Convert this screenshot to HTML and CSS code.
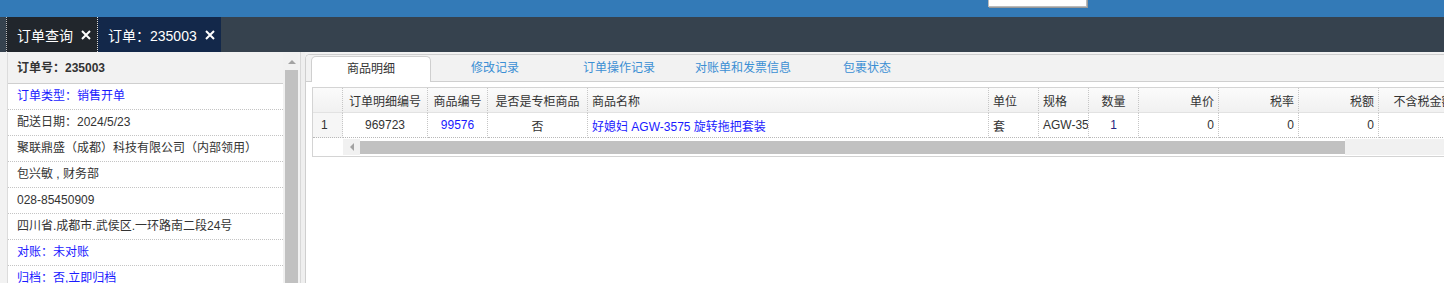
FILE: index.html
```html
<!DOCTYPE html>
<html lang="zh-CN">
<head>
  <meta charset="UTF-8">
  <meta name="viewport" content="width=device-width, initial-scale=1.0">
  <title>订单：235003</title>
  <link rel="stylesheet" href="styles.css">
</head>
<body>

<div class="topbar">
  <div class="logo">订单管理系统后台</div>
  <div class="search"></div>
</div>

<div class="tabbar">
  <div class="tab tab-first">订单查询
    <svg class="close" width="10" height="10" viewBox="0 0 10 10"><path d="M1 1L9 9M9 1L1 9" stroke="#fff" stroke-width="2"/></svg>
  </div>
  <div class="tab tab-cur">订单：235003
    <svg class="close" width="10" height="10" viewBox="0 0 10 10"><path d="M1 1L9 9M9 1L1 9" stroke="#fff" stroke-width="2"/></svg>
  </div>
</div>

<div class="main">
  <div class="side">
    <div class="info">
      <div class="info-head">订单号：235003</div>
      <div class="info-row blue">订单类型：销售开单</div>
      <div class="info-row">配送日期：2024/5/23</div>
      <div class="info-row">聚联鼎盛（成都）科技有限公司（内部领用）</div>
      <div class="info-row">包兴敏 , 财务部</div>
      <div class="info-row">028-85450909</div>
      <div class="info-row">四川省.成都市.武侯区.一环路南二段24号</div>
      <div class="info-row blue">对账：未对账</div>
      <div class="info-row blue">归档：否,立即归档</div>
    </div>
    <div class="vscroll">
      <div class="vscroll-up"><span class="arrow-up"></span></div>
      <div class="vscroll-thumb"></div>
    </div>
  </div>

  <div class="split"></div>

  <div class="content">
    <div class="subtabs">
      <div class="subtab active">商品明细</div>
      <div class="subtab">修改记录</div>
      <div class="subtab">订单操作记录</div>
      <div class="subtab">对账单和发票信息</div>
      <div class="subtab">包裹状态</div>
    </div>

    <div class="grid">
      <table class="items">
        <colgroup>
          <col style="width:30px"><col style="width:85px"><col style="width:60px"><col style="width:100px">
          <col style="width:401px"><col style="width:50px"><col style="width:50px"><col style="width:50px">
          <col style="width:80px"><col style="width:80px"><col style="width:80px"><col style="width:90px">
        </colgroup>
        <thead>
          <tr>
            <th class="rn"></th>
            <th>订单明细编号</th>
            <th>商品编号</th>
            <th>是否是专柜商品</th>
            <th class="left">商品名称</th>
            <th class="left">单位</th>
            <th class="left">规格</th>
            <th>数量</th>
            <th class="right">单价</th>
            <th class="right">税率</th>
            <th class="right">税额</th>
            <th>不含税金额</th>
          </tr>
        </thead>
        <tbody>
          <tr>
            <td class="rn">1</td>
            <td>969723</td>
            <td class="link">99576</td>
            <td>否</td>
            <td class="left link">好媳妇 AGW-3575 旋转拖把套装</td>
            <td class="left">套</td>
            <td class="left">AGW-3575</td>
            <td class="qty">1</td>
            <td class="right">0</td>
            <td class="right">0</td>
            <td class="right">0</td>
            <td></td>
          </tr>
        </tbody>
      </table>
      <div class="hscroll">
        <div class="hscroll-blank"></div>
        <div class="hscroll-left"><span class="arrow-left"></span></div>
        <div class="hscroll-thumb"></div>
      </div>
    </div>
  </div>
</div>

</body>
</html>
```

FILE: styles.css
```css
body {
  margin: 0;
  height: 283px;
  overflow: hidden;
  font-family: "Liberation Sans", "Noto Sans CJK SC", sans-serif;
  font-size: 12px;
  color: #333;
  background-color: #f2f2f2;
}

/* top bar */
.topbar {
  display: flex;
  height: 17px;
  padding-left: 12px;
  overflow: hidden;
  background-color: #337ab7;
}
.logo {
  flex: 0 0 976px;
  margin-top: -20px;
  font-size: 18px;
  line-height: 20px;
  font-weight: bold;
  color: #fff;
  white-space: nowrap;
}
.search {
  width: 97px;
  height: 20px;
  margin-top: -15px;
  background-color: #fff;
  border: 1px solid #bbb;
  box-shadow: 1px 1px 0 #9a9a9a;
}

/* page tabs */
.tabbar {
  display: flex;
  height: 35px;
  padding-left: 6px;
  background-color: #36424e;
}
.tab {
  display: flex;
  align-items: center;
  gap: 8px;
  font-size: 14px;
  color: #fff;
  white-space: nowrap;
}
.tab-first {
  width: 80px;
  padding-left: 10px;
  background-color: #21262c;
  border-left: 1px dotted #bbb;
  border-right: 1px dotted #ddd;
}
.tab-cur {
  width: 113px;
  padding-left: 10px;
  background-color: #13284a;
}
.close {
  flex: none;
}

/* main area */
.main {
  display: flex;
  height: 231px;
  overflow: hidden;
}
.side {
  display: flex;
  flex: none;
  margin: 1px 0 0 7px;
}
.info {
  width: 275px;
  background-color: #fff;
  border-left: 1px solid #dcdcdc;
}
.info-head {
  height: 30px;
  line-height: 30px;
  padding-left: 9px;
  font-weight: bold;
  background-color: #f2f2f2;
  border-bottom: 1px solid #cfcfcf;
}
.info-row {
  height: 25px;
  line-height: 25px;
  padding-left: 9px;
  white-space: nowrap;
  border-bottom: 1px dotted #c4c4c4;
}
.blue {
  color: #1a1aff;
}
.vscroll {
  width: 15px;
  background-color: #f1f1f1;
}
.vscroll-up {
  display: flex;
  justify-content: center;
  align-items: center;
  height: 17px;
  padding-left: 2px;
}
.arrow-up {
  border-left: 4px solid transparent;
  border-right: 4px solid transparent;
  border-bottom: 4px solid #a3a3a3;
}
.vscroll-thumb {
  height: 300px;
  margin-left: 2px;
  background-color: #c1c1c1;
}
.split {
  flex: none;
  width: 4px;
  margin-left: 2px;
  background-color: #efefef;
  border-left: 1px solid #d8d8d8;
}

/* right panel */
.content {
  flex: 1;
  min-width: 0;
  margin-top: 2px;
  background-color: #fff;
  border-top: 1px solid #cfcfcf;
  border-left: 1px solid #cfcfcf;
  border-top-left-radius: 5px;
  overflow: hidden;
}
.subtabs {
  display: flex;
  align-items: flex-end;
  gap: 4px;
  height: 26px;
  padding-left: 5px;
  background-color: #f2f2f2;
  border-bottom: 1px solid #cfcfcf;
}
.subtab {
  width: 118px;
  height: 25px;
  line-height: 24px;
  text-align: center;
  color: #3b8fd4;
  border: 1px solid transparent;
  border-bottom: none;
}
.subtab.active {
  margin-bottom: -1px;
  height: 25px;
  color: #333;
  background-color: #fff;
  border-color: #cfcfcf;
  border-radius: 5px 5px 0 0;
}

/* grid */
.grid {
  margin: 5px 0 0 6px;
  border: 1px solid #d4d4d4;
  border-right: none;
  overflow: hidden;
}
.items {
  table-layout: fixed;
  width: 1156px;
  border-collapse: separate;
  border-spacing: 0;
}
.items th,
.items td {
  box-sizing: border-box;
  padding: 0 4px;
  text-align: center;
  font-weight: normal;
  white-space: nowrap;
  overflow: hidden;
  border-right: 1px dotted #c6c6c6;
}
.items th {
  height: 25px;
  background: linear-gradient(#fbfbfb, #f1f1f1);
  border-bottom: 1px solid #e2e2e2;
}
.items td {
  height: 25px;
  border-bottom: 1px dotted #b8b8b8;
}
.items .rn {
  background-color: #f6f6f6;
}
.items td.rn {
  text-align: left;
  padding-left: 8px;
}
.items .left {
  text-align: left;
}
.items .right {
  text-align: right;
}
.items .link {
  color: #1a1aff;
}
.items .qty {
  color: #25257f;
}

.hscroll {
  display: flex;
  height: 16px;
  padding: 1px 0;
}
.hscroll-blank {
  width: 30px;
}
.hscroll-left {
  display: flex;
  align-items: center;
  justify-content: center;
  width: 17px;
  background-color: #f1f1f1;
}
.arrow-left {
  border-top: 4px solid transparent;
  border-bottom: 4px solid transparent;
  border-right: 4px solid #a3a3a3;
}
.hscroll-thumb {
  width: 985px;
  margin: 2px 0 1px;
  background-color: #c1c1c1;
}
.hscroll::after {
  content: "";
  flex: 1;
  background-color: #f1f1f1;
}
```
